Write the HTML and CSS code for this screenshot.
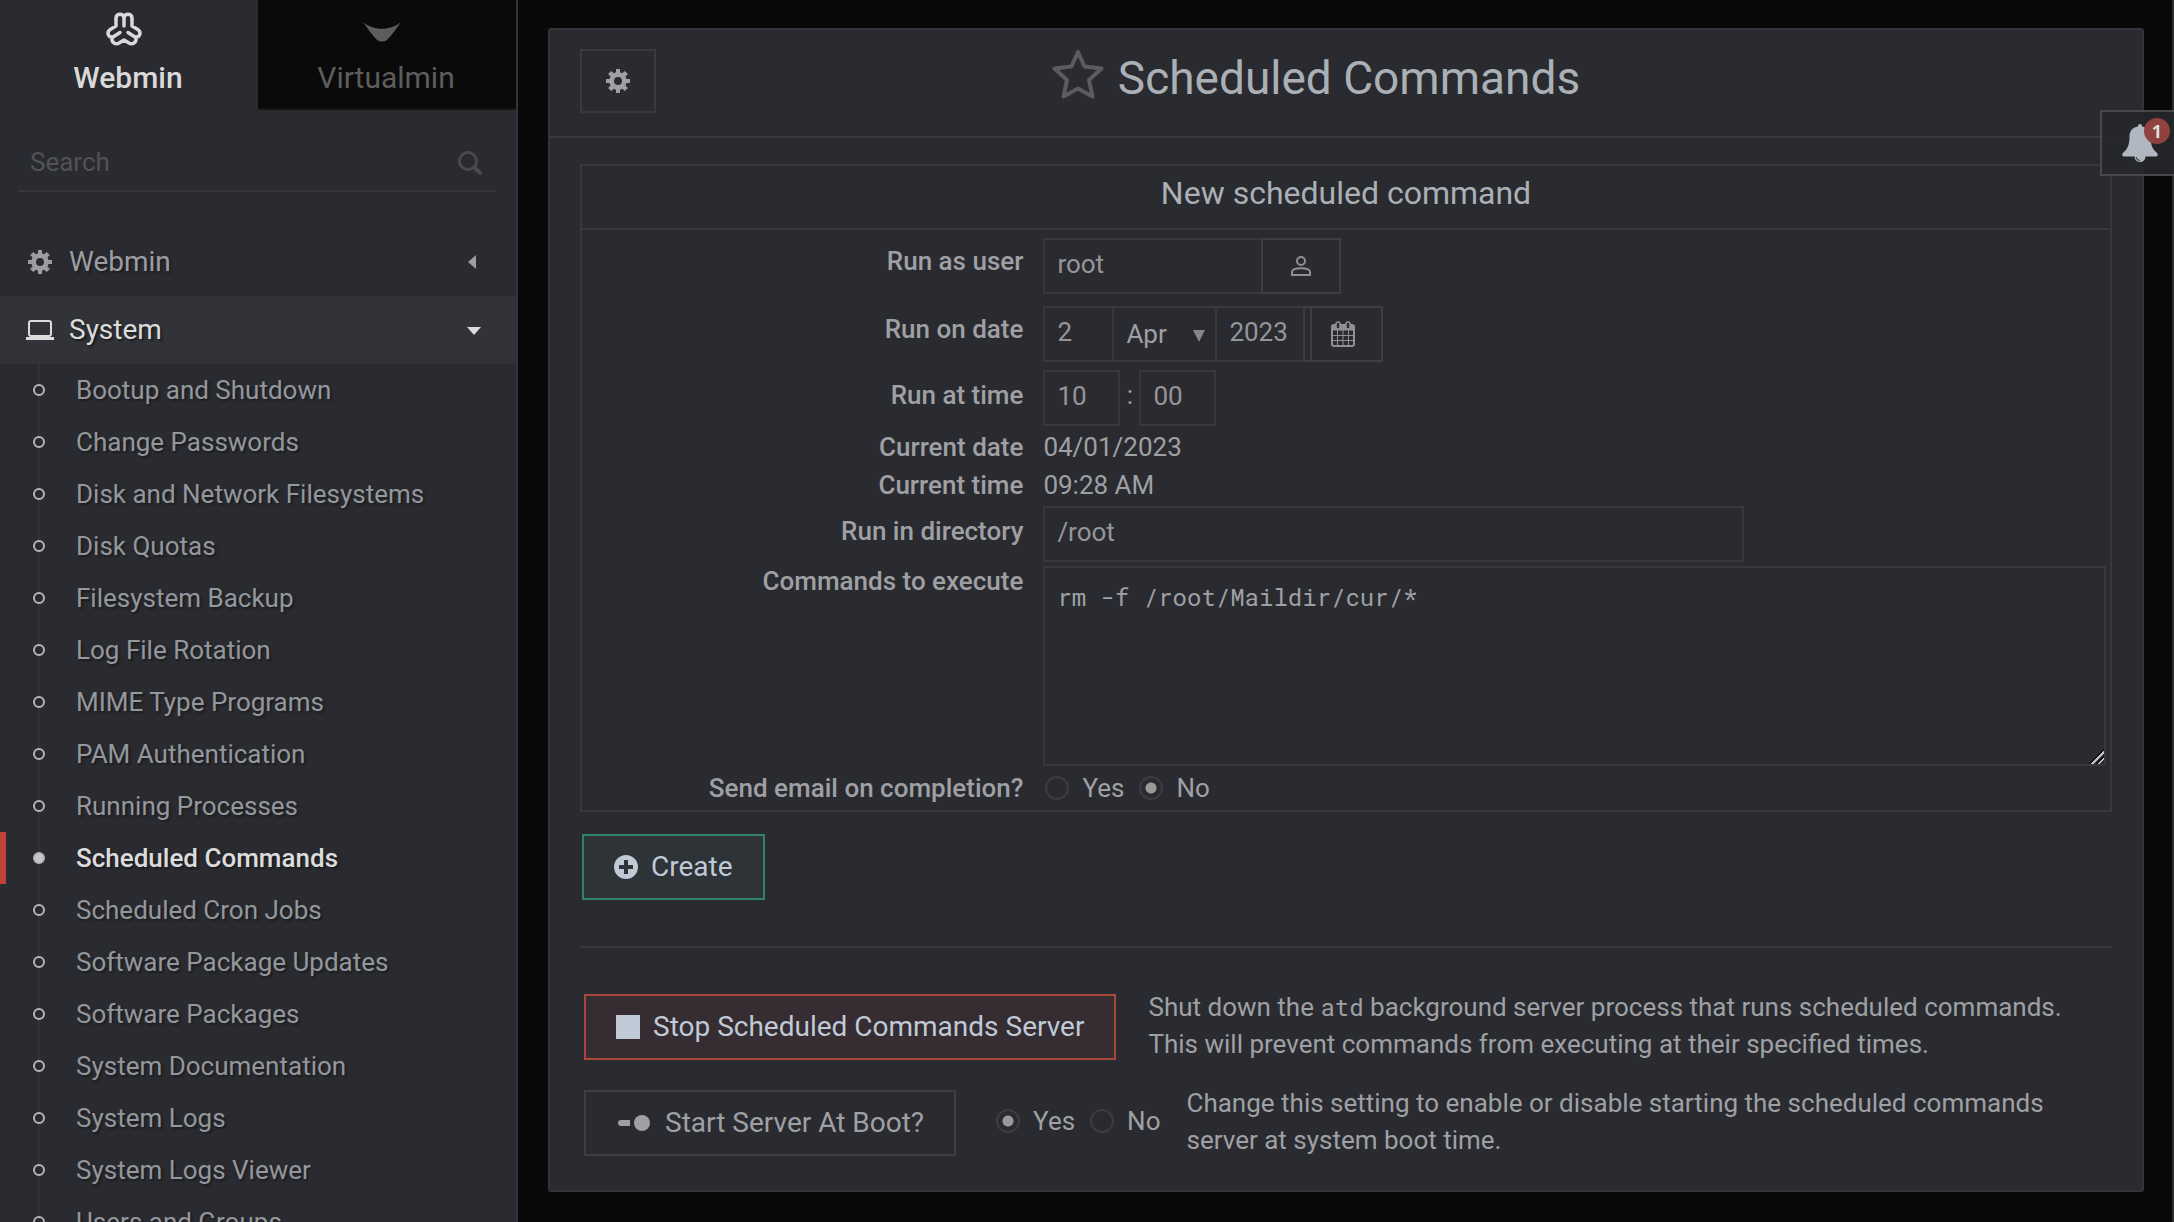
FILE: index.html
```html
<!DOCTYPE html>
<html lang="en">
<head>
<meta charset="utf-8">
<title>Scheduled Commands</title>
<link rel="stylesheet" href="styles.css">
</head>
<body>
<svg class="defs" aria-hidden="true">
  <symbol id="gear" viewBox="0 0 24 24">
    <path fill-rule="evenodd" d="M10 0h4v3.300l2.300 1 2.400-2.400 3.200 3.100-2.400 2.500 1 2.500H24v4h-3.500l-1 2.500 2.400 2.500-3.200 3.100-2.400-2.400-2.300 1V24h-4v-3.300l-2.300-1-2.400 2.400L2.100 19l2.400-2.500-1-2.500H0v-4h3.500l1-2.500L2.100 5l3.200-3.100 2.400 2.400 2.300-1zM12 8a4 4 0 1 0 0 8 4 4 0 0 0 0-8z"/>
  </symbol>
</svg>
<div class="app">
  <aside class="sidebar">
    <nav class="tabs">
      <a class="tab tab-active" href="#">
        <svg class="tab-icon" width="36" height="34" viewBox="0 0 36 34" fill="none" stroke="currentColor" stroke-width="3.500" stroke-linecap="round" stroke-linejoin="round"><path d="M18 14V6c0-5-8-5-8 0v8l-5 3c-5 3-3 8 1 8-1 6 4 8 7 6l5-3 5 3c3 2 8 0 7-6 4 0 6-5 1-8l-5-3V6c0-5-8-5-8 0"/><path d="M7 25l7-4.500M29 25l-7-4.500"/></svg>
        <span>Webmin</span>
      </a>
      <a class="tab" href="#">
        <svg class="tab-icon" width="38" height="34" viewBox="0 0 38 34" fill="currentColor"><path d="M0 10c10 9 28 9 38 0-5 7-9 13-14 18q-5 3-10 0C9 23 5 17 0 10z"/></svg>
        <span>Virtualmin</span>
      </a>
    </nav>
    <div class="search">
      <input type="text" placeholder="Search" aria-label="Search">
      <svg width="24" height="25" viewBox="0 0 24 25" fill="none" stroke="currentColor" stroke-linecap="round"><circle cx="10" cy="11" r="8.500" stroke-width="3"/><path d="M16.500 17.500l5.500 5.500" stroke-width="4"/></svg>
    </div>
    <nav class="menu">
      <a class="menu-head" href="#">
        <svg class="menu-icon" width="24" height="24" fill="currentColor"><use href="#gear"/></svg>
        <span>Webmin</span>
        <svg class="caret" width="14" height="14" viewBox="0 0 14 14" fill="currentColor"><path d="M9 0v14L1 7z"/></svg>
      </a>
      <a class="menu-head menu-open" href="#">
        <svg class="menu-icon" width="28" height="20" viewBox="0 0 28 20"><rect x="3" y="1" width="22" height="15" rx="2" fill="none" stroke="currentColor" stroke-width="2"/><path d="M0 17h28v3H0z" fill="currentColor"/></svg>
        <span>System</span>
        <svg class="caret" width="14" height="14" viewBox="0 0 14 14" fill="currentColor"><path d="M0 4h14l-7 8z"/></svg>
      </a>
      <ul class="submenu">
        <li><a href="#">Bootup and Shutdown</a></li>
        <li><a href="#">Change Passwords</a></li>
        <li><a href="#">Disk and Network Filesystems</a></li>
        <li><a href="#">Disk Quotas</a></li>
        <li><a href="#">Filesystem Backup</a></li>
        <li><a href="#">Log File Rotation</a></li>
        <li><a href="#">MIME Type Programs</a></li>
        <li><a href="#">PAM Authentication</a></li>
        <li><a href="#">Running Processes</a></li>
        <li class="current"><a href="#">Scheduled Commands</a></li>
        <li><a href="#">Scheduled Cron Jobs</a></li>
        <li><a href="#">Software Package Updates</a></li>
        <li><a href="#">Software Packages</a></li>
        <li><a href="#">System Documentation</a></li>
        <li><a href="#">System Logs</a></li>
        <li><a href="#">System Logs Viewer</a></li>
        <li><a href="#">Users and Groups</a></li>
      </ul>
    </nav>
  </aside>

  <main class="main">
    <section class="panel">
      <header class="panel-head">
        <button class="btn-gear" type="button" aria-label="Module settings"><svg width="24" height="24" fill="currentColor"><use href="#gear"/></svg></button>
        <h1>
          <svg width="52" height="50" viewBox="0 0 52 50" fill="none" stroke="currentColor" stroke-width="4" stroke-linejoin="round"><path d="M26 3l6.500 14.500 17 2L37 31l3.500 16.500L26 39.500l-14.500 8L15 31 2.500 19.500l17-2z"/></svg>
          <span>Scheduled Commands</span>
        </h1>
      </header>
      <div class="panel-body">
        <form>
          <div class="card">
            <h2>New scheduled command</h2>
            <div class="rows">
              <div class="row row-picker">
                <label for="user">Run as user</label>
                <div class="value joined"><input class="w-user" id="user" type="text" value="root"><button class="pick" type="button" aria-label="Select user"><svg width="22" height="22" viewBox="0 0 22 22" fill="none" stroke="currentColor" stroke-width="2"><circle cx="11" cy="6" r="4"/><path d="M2 20v-3c0-5 18-5 18 0v3z"/></svg></button></div>
              </div>
              <div class="row row-picker">
                <label for="day">Run on date</label>
                <div class="value joined"><input class="w-day" id="day" type="text" value="2"><span class="select"><select aria-label="Month"><option>Apr</option></select></span><input class="w-year" type="text" value="2023" aria-label="Year"><button class="pick pick-date" type="button" aria-label="Pick date"><svg width="24" height="26" viewBox="0 0 24 26" fill="none" stroke="currentColor"><path d="M2 4h20a1 1 0 0 1 1 1v4H1V5a1 1 0 0 1 1-1z" fill="currentColor"/><rect x="1" y="4" width="22" height="21" rx="2" stroke-width="2"/><path d="M1 14.500h22M1 19.500h22M6.500 9v16M12 9v16M17.500 9v16"/><rect x="5" y="1" width="4" height="7" rx="2" fill="#2a2b30" stroke-width="1.500"/><rect x="15" y="1" width="4" height="7" rx="2" fill="#2a2b30" stroke-width="1.500"/></svg></button></div>
              </div>
              <div class="row row-control">
                <label for="hour">Run at time</label>
                <div class="value"><input class="w-time" id="hour" type="text" value="10"><span class="colon">:</span><input class="w-time" type="text" value="00" aria-label="Minute"></div>
              </div>
              <div class="row"><b>Current date</b><div class="value">04/01/2023</div></div>
              <div class="row"><b>Current time</b><div class="value">09:28 AM</div></div>
              <div class="row row-control">
                <label for="dir">Run in directory</label>
                <div class="value"><input class="w-dir" id="dir" type="text" value="/root"></div>
              </div>
              <div class="row row-area">
                <label for="cmd">Commands to execute</label>
                <div class="value"><textarea id="cmd" spellcheck="false">rm -f /root/Maildir/cur/*</textarea></div>
              </div>
              <div class="row row-email">
                <b>Send email on completion?</b>
                <div class="value radios"><label><input type="radio" name="mail">Yes</label><label><input type="radio" name="mail" checked>No</label></div>
              </div>
            </div>
          </div>
          <button class="btn btn-create" type="button"><svg width="24" height="24" viewBox="0 0 24 24" fill="currentColor"><path fill-rule="evenodd" d="M12 0a12 12 0 1 0 0 24 12 12 0 0 0 0-24zM10 5h4v5h5v4h-5v5h-4v-5H5v-4h5z"/></svg>Create</button>
        </form>
        <hr>
        <div class="action">
          <button class="btn btn-stop" type="button"><svg width="24" height="24" viewBox="0 0 24 24" fill="currentColor"><path d="M0 0h24v24H0z"/></svg>Stop Scheduled Commands Server</button>
          <p class="stop-text">Shut down the <code>atd</code> background server process that runs scheduled commands. This will prevent commands from executing at their specified times.</p>
        </div>
        <div class="action">
          <button class="btn" type="button"><svg width="36" height="24" viewBox="0 0 36 24" fill="currentColor"><path d="M5 9h9v6H5a3 3 0 0 1 0-6z"/><circle cx="26" cy="12" r="8"/></svg>Start Server At Boot?</button>
          <div class="radios boot-radios"><label><input type="radio" name="boot" checked>Yes</label><label><input type="radio" name="boot">No</label></div>
          <p>Change this setting to enable or disable starting the scheduled commands server at system boot time.</p>
        </div>
      </div>
    </section>
  </main>
</div>
<button class="notify" type="button" aria-label="Notifications">
  <svg width="36" height="38" viewBox="0 0 36 38" fill="currentColor"><path fill-rule="evenodd" d="M18 0c1.500 0 2 1 2 2.500 6 1 8.500 5 8.500 10 0 9 2.500 13 6 16 2 1.500 1.500 4-.500 4H23.500a5.500 5.500 0 0 1-11 0H2c-2 0-2.500-2.500-.500-4 3.500-3 6-7 6-16 0-5 2.500-9 8.500-10C16 1 16.500 0 18 0z"/><path d="M14 33a4 4 0 0 0 4 3.500" fill="none" stroke="#2a2b30"/></svg>
  <span class="badge">1</span>
</button>
</body>
</html>
```

FILE: styles.css
```css
*, *::before, *::after { box-sizing: border-box; }

:root {
  --surface: #2a2b30;
  --line: #37383c;
  --text: #9fa0a4;
  --heading: #aab0b5;
}

html { border-right: 2px solid #2c2c2d; height: 100%; background: #090909; }

body {
  margin: 0;
  height: 100%;
  overflow: hidden;
  color: var(--text);
  font: 26px/38px Roboto, sans-serif;
}

a { color: inherit; text-decoration: none; }
h1, h2, p, ul { margin: 0; padding: 0; font-weight: 400; }
svg { flex: none; display: block; }
.defs { position: absolute; width: 0; height: 0; }

input, select, textarea, button {
  margin: 0;
  color: inherit;
  font: inherit;
  background: var(--surface);
  border: 2px solid var(--line);
  border-radius: 0;
}

.app { display: flex; height: 100%; }

/* Sidebar */
.sidebar {
  flex: none;
  width: 518px;
  overflow: hidden;
  background: var(--surface);
  border-right: 2px solid #333439;
}

.tabs { display: flex; height: 110px; font-size: 30px; line-height: 36px; }
.tab {
  flex: 1;
  display: flex;
  flex-direction: column;
  align-items: center;
  gap: 14px;
  padding: 12px 2px 0 0;
  color: #5d5d5d;
  background: #0a0a0a;
  border-bottom: 2px solid #141414;
}
.tab-active {
  color: #d9d9d9;
  font-weight: 500;
  background: none;
  border-color: transparent;
}
.tab-icon { margin-right: 8px; }

.search {
  display: flex;
  align-items: center;
  height: 60px;
  margin: 22px 20px 36px 18px;
  padding: 2px 14px 0 10px;
  color: #4a4a4b;
  border-bottom: 2px solid #35363b;
}
.search input { flex: 1; padding: 0 2px; border: 0; }
.search input::placeholder { color: #515256; opacity: 1; }

.menu-head {
  display: flex;
  align-items: center;
  height: 68px;
  padding: 0 35px 0 26px;
  color: #9b9da2;
  font-size: 28px;
  text-shadow: 2px 2px 2px #1c1d20;
}
.menu-head span { flex: 1; margin-left: 15px; }
.menu-icon { width: 28px; }
.menu-open { color: #dcdcdc; background: #323338; }

.submenu { list-style: none; }
.submenu li {
  position: relative;
  background: linear-gradient(#323338, #323338) 38px 0 / 2px 100% no-repeat;
}
.submenu a {
  display: block;
  height: 52px;
  padding-left: 76px;
  color: #94979b;
  line-height: 53px;
  text-shadow: 2px 2px 2px #1c1d20;
}
.submenu li::before {
  content: "";
  position: absolute;
  left: 33px;
  top: 20px;
  width: 12px;
  height: 12px;
  background: var(--surface);
  border: 2px solid #b5b5b6;
  border-radius: 50%;
}
.submenu .current { box-shadow: inset 6px 0 #bd4237; }
.submenu .current::before { background: #c6c6c7; }
.submenu .current a { color: #dcdcdc; font-weight: 500; }

/* Panel */
.main { flex: 1; min-width: 0; padding: 28px 28px 30px 30px; }
.panel { background: var(--surface); border: 2px solid #343539; border-radius: 3px; }

.panel-head {
  display: flex;
  align-items: flex-start;
  height: 108px;
  padding: 19px 166px 0 30px;
  border-bottom: 2px solid #3a3b3f;
}
.btn-gear {
  display: grid;
  place-items: center;
  width: 76px;
  height: 64px;
  border-color: #393a3e;
}
h1 {
  flex: 1;
  display: flex;
  justify-content: center;
  gap: 14px;
  color: var(--heading);
  font-size: 46px;
  line-height: 58px;
}
h1 svg { color: #5b5c60; }

.panel-body { padding: 26px 30px 31px; }
.card { border: 2px solid var(--line); }
h2 {
  height: 64px;
  color: var(--heading);
  border-bottom: 2px solid var(--line);
  font-size: 32px;
  line-height: 54px;
  text-align: center;
}

/* Form rows */
.rows { padding: 2px 0; }
.row { display: grid; grid-template-columns: 30% 1fr; }
.row > label, .row > b { padding-right: 17px; font-weight: 500; text-align: right; }
.value { display: flex; padding: 0 4px 0 3px; }
.row-picker { padding: 6px 0; }
.row-picker > label { padding-top: 4px; }
.row-control { padding: 2px 0; }
.row-control > label { padding-top: 6px; }
.row-area { padding: 2px 0; }
.row-area > label { line-height: 30px; }
.row-email { padding: 1px 0; }

.value input[type="text"] { height: 56px; padding: 0 12px 4px; color: #95969b; }
.joined > * + * { margin-left: -2px; }
.w-user { width: 220px; }
.w-day { width: 71px; }
.w-year { width: 90px; }
.value .w-time { width: 77px; padding-bottom: 0; }
.value .w-dir { width: 701px; }
.colon { width: 19px; line-height: 50px; text-align: center; }

.select { position: relative; }
.select::after {
  content: "";
  position: absolute;
  right: 12px;
  top: 24px;
  border: 6px solid transparent;
  border-top: 12px solid #85858a;
  border-bottom: 0;
}
select {
  appearance: none;
  width: 105px;
  height: 56px;
  padding: 0 12px;
}

.pick {
  display: grid;
  place-items: center;
  width: 80px;
  height: 56px;
  padding-bottom: 2px;
  color: #8f9095;
  border-color: #3d3e43;
}
.pick-date { box-shadow: inset 5px 0 var(--surface), inset 7px 0 #3d3e43; }

textarea {
  flex: 1;
  height: 200px;
  padding: 11px 12px;
  font: 24px/36px "Roboto Mono", "DejaVu Sans Mono", monospace;
  resize: both;
}
textarea::-webkit-resizer {
  background: linear-gradient(135deg, transparent 50%, #121316 50% 56%, #c4c4c4 56% 64%, transparent 64% 72%, #121316 72% 78%, #c4c4c4 78% 86%, transparent 86%);
}

.radios { display: flex; }
.radios label { display: flex; align-items: center; margin-right: 13px; }
.radios input {
  appearance: none;
  width: 24px;
  height: 24px;
  margin: 0 13px 0 2px;
  border: 2px solid #3c3d41;
  border-radius: 50%;
}
.radios input:checked { background: radial-gradient(circle, #999998 5px, transparent 6px); }

/* Buttons */
.btn {
  flex: none;
  display: flex;
  align-items: center;
  gap: 13px;
  height: 66px;
  padding: 0 30px;
  border-color: #3d3e43;
  font-size: 28px;
}
.btn-create { margin: 22px 0 46px 2px; color: #c0c9d6; background: #2d3336; border-color: #328264; }
.btn-stop { color: #c0c9d6; background: #352d32; border-color: #a8473a; }

hr { height: 2px; margin: 0; border: 0; background: var(--line); }

.action { display: flex; align-items: flex-start; padding-left: 4px; }
hr + .action { margin: 46px 0 27px; }
.action p { flex: 1; margin-right: 46px; margin-top: -5px; line-height: 37px; }
.action .stop-text { margin-left: 32px; }
code { font: 24px/30px "Roboto Mono", "DejaVu Sans Mono", monospace; }
.boot-radios { margin: 12px 13px 0 38px; }

/* Notification handle */
.notify {
  position: fixed;
  top: 110px;
  right: 0;
  width: 74px;
  height: 66px;
  padding: 0 0 0 20px;
  color: #b0b7c1;
  background: #26272bee;
  border-color: #47484c;
  border-right: 0;
}
.badge {
  position: absolute;
  top: 6px;
  right: 4px;
  width: 26px;
  height: 26px;
  color: #dedede;
  font: 700 18px/26px "Open Sans", sans-serif;
  background: #8f4240;
  border-radius: 50%;
}
```
